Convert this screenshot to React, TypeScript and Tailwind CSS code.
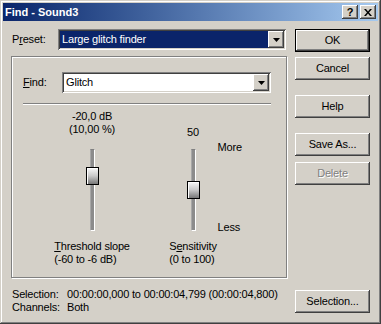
import React from 'react'

const raised =
  'shadow-[inset_-1px_-1px_#404040,inset_1px_1px_#ffffff,inset_-2px_-2px_#808080,inset_2px_2px_#d4d0c8]'
const sunken =
  'shadow-[inset_1px_1px_#808080,inset_-1px_-1px_#ffffff,inset_2px_2px_#404040,inset_-2px_-2px_#d4d0c8]'

function Arrow() {
  return (
    <svg width="7" height="4" viewBox="0 0 7 4">
      <polygon points="0,0 7,0 3.5,4" fill="#000" />
    </svg>
  )
}

function DropButton() {
  return (
    <div className={`w-[16px] h-[17px] bg-[#d4d0c8] flex items-center justify-center ${raised}`}>
      <Arrow />
    </div>
  )
}

function Button({ label, isDefault, disabled }: { label: string; isDefault?: boolean; disabled?: boolean }) {
  if (isDefault) {
    return (
      <div className="w-[75px] h-[23px] border border-black">
        <div className={`w-full h-full flex items-center justify-center ${raised}`}>{label}</div>
      </div>
    )
  }
  return (
    <div
      className={`w-[75px] h-[23px] flex items-center justify-center ${raised} ${
        disabled ? 'text-[#808080] [text-shadow:1px_1px_#ffffff]' : ''
      }`}
    >
      {label}
    </div>
  )
}

function Slider({ thumbTop }: { thumbTop: number }) {
  return (
    <div className="relative mt-[9px] w-[5px] h-[82px] bg-[#8c8c8c] border-l border-t border-l-[#a8a8a8] border-t-[#808080] border-r border-b border-r-white border-b-white">
      <div
        className="absolute left-[-5px] w-[13px] h-[18px] border border-black bg-linear-to-b from-[#f8f8f8] via-[#c8c8c8] to-[#787878] shadow-[inset_1px_1px_#ffffff]"
        style={{ top: thumbTop }}
      />
    </div>
  )
}

export default function App() {
  return (
    <div
      className="w-[381px] h-[324px] bg-[#d4d0c8] p-[3px] flex flex-col text-black text-[11px] leading-[13px] tracking-[-0.18px] shadow-[inset_-1px_-1px_#404040,inset_1px_1px_#d4d0c8,inset_-2px_-2px_#808080,inset_2px_2px_#ffffff]"
      style={{ fontFamily: '"Liberation Sans", Arial, sans-serif' }}
    >
      {/* caption */}
      <div className="h-[18px] bg-linear-to-r from-[#0a246a] to-[#a6caf0] flex items-center pl-[2px] pr-[2px]">
        <span className="text-white font-bold flex-1 tracking-normal">Find - Sound3</span>
        <div className="flex gap-[2px]">
          <div className={`w-[16px] h-[14px] bg-[#d4d0c8] flex items-center justify-center font-bold text-[11px] leading-none ${raised}`}>
            ?
          </div>
          <div className={`w-[16px] h-[14px] bg-[#d4d0c8] flex items-center justify-center ${raised}`}>
            <svg width="8" height="7" viewBox="0 0 8 7">
              <path d="M0 0h2l2 2.5L6 0h2L5 3.5 8 7H6L4 4.5 2 7H0l3-3.5z" fill="#000" />
            </svg>
          </div>
        </div>
      </div>

      <div className="flex flex-1">
        {/* left column */}
        <div className="w-[292px] pl-[8px] pt-[8px]">
          <div className="flex items-center h-[21px]">
            <span className="w-[47px] pl-[1px]">
              P<u className="underline-offset-1">r</u>eset:
            </span>
            <div className={`w-[228px] h-[21px] flex items-center p-[2px] bg-[#0a246a] ${sunken}`}>
              <span className="flex-1 text-white pl-[2px]">Large glitch finder</span>
              <DropButton />
            </div>
          </div>

          <div className="mt-[6px] w-[276px] h-[222px] border border-[#808080] shadow-[inset_1px_1px_#ffffff,1px_1px_#ffffff] pt-[15px] pl-[11px]">
            <div className="flex items-center h-[21px]">
              <span className="w-[39px]">
                <u className="underline-offset-1">F</u>ind:
              </span>
              <div className={`w-[209px] h-[21px] flex items-center p-[2px] bg-white ${sunken}`}>
                <span className="flex-1 pl-[2px]">Glitch</span>
                <DropButton />
              </div>
            </div>
            <div className="mt-[10px] w-[248px] h-[2px] border-t border-t-[#808080] border-b border-b-white" />

            <div className="flex mt-[5px]">
              <div className="ml-[29px] w-[80px] flex flex-col items-center">
                <div className="h-[30px] flex flex-col items-center">
                  <span>-20,0 dB</span>
                  <span>(10,00 %)</span>
                </div>
                <div className="h-[94px] flex justify-center">
                  <Slider thumbTop={17} />
                </div>
                <div className="mt-[6px] flex flex-col">
                  <span>
                    <u className="underline-offset-1">T</u>hreshold slope
                  </span>
                  <span>(-60 to -6 dB)</span>
                </div>
              </div>

              <div className="ml-[21px] w-[80px] flex flex-col items-center">
                <div className="h-[30px] flex items-end justify-center pb-[1px]">
                  <span>50</span>
                </div>
                <div className="w-full h-[94px] grid grid-cols-[minmax(0,1fr)_5px_minmax(0,1fr)]">
                  <div />
                  <Slider thumbTop={31} />
                  <div className="flex flex-col justify-between pl-[22px] pt-[1px] whitespace-nowrap">
                    <span>More</span>
                    <span>Less</span>
                  </div>
                </div>
                <div className="mt-[6px] flex flex-col">
                  <span>
                    S<u className="underline-offset-1">e</u>nsitivity
                  </span>
                  <span>(0 to 100)</span>
                </div>
              </div>
            </div>
          </div>

          <div className="mt-[10px] pl-[1px] grid grid-cols-[55px_1fr] whitespace-nowrap">
            <span>Selection:</span>
            <span>00:00:00,000 to 00:00:04,799 (00:00:04,800)</span>
            <span>Channels:</span>
            <span>Both</span>
          </div>
        </div>

        {/* right column */}
        <div className="w-[75px] pt-[8px] pb-[8px] flex flex-col">
          <Button label="OK" isDefault />
          <div className="mt-[5px]">
            <Button label="Cancel" />
          </div>
          <div className="mt-[15px]">
            <Button label="Help" />
          </div>
          <div className="mt-[15px]">
            <Button label="Save As..." />
          </div>
          <div className="mt-[6px]">
            <Button label="Delete" disabled />
          </div>
          <div className="mt-auto">
            <Button label="Selection..." />
          </div>
        </div>
      </div>
    </div>
  )
}
